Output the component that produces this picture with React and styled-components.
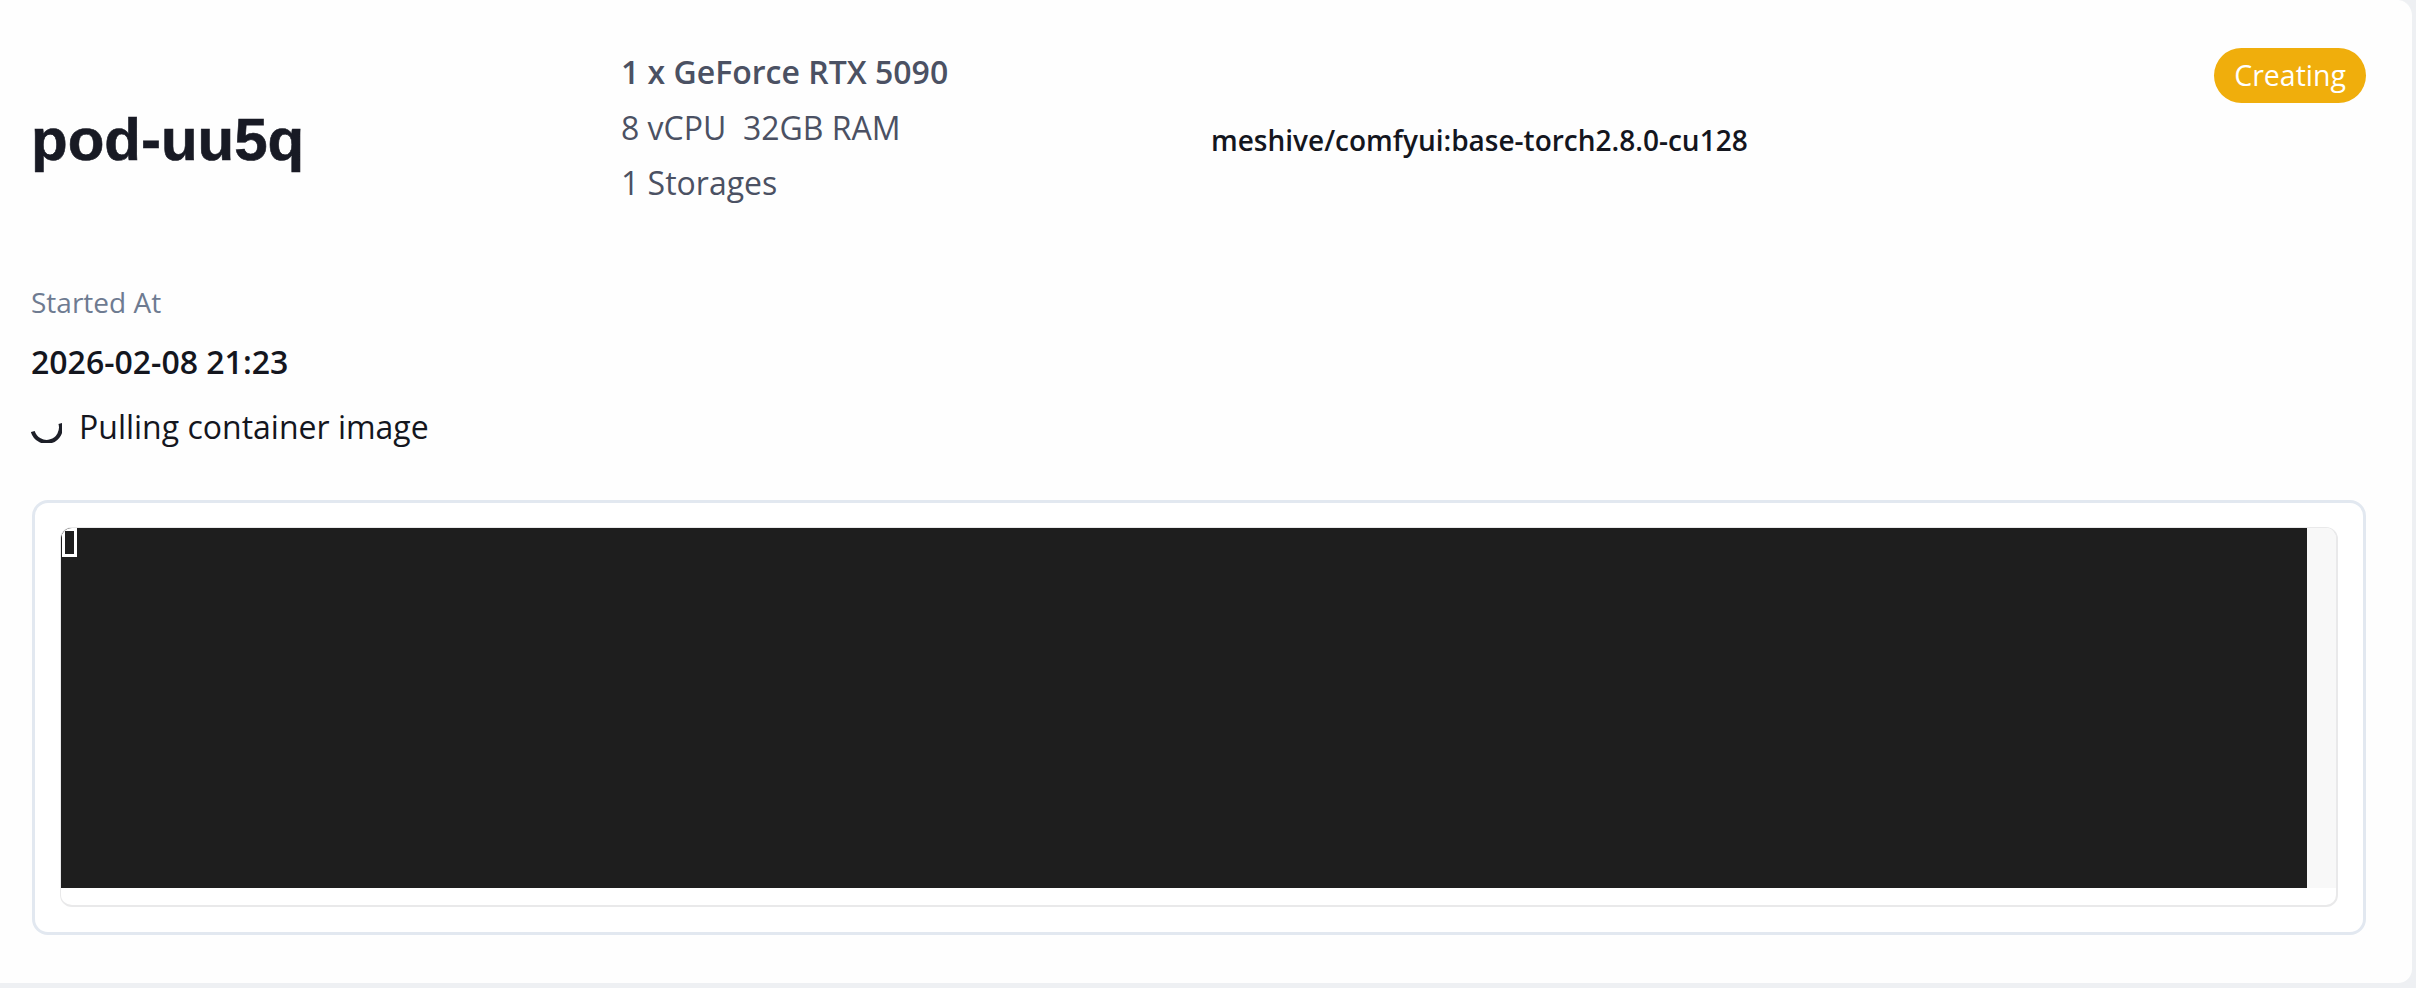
import styled, { createGlobalStyle } from 'styled-components';

const GlobalStyle = createGlobalStyle`
  html, body {
    margin: 0;
    padding: 0;
    background: #eef0f3;
  }
  * { box-sizing: border-box; }
`

const Card = styled.div`
  width: 2414px;
  height: 985px;
  padding: 44px 46px 0 31px;
  background: #fefefe;
  border-right: 2px solid #eef0f3;
  border-bottom: 2px solid #eef0f3;
  border-radius: 0 16px 16px 0;
  font-family: "Open Sans", sans-serif;
`

const Summary = styled.div`
  display: grid;
  grid-template-columns: 590px 590px 1fr auto;
  height: 192px;
  align-items: center;
`

const Title = styled.h1`
  margin: 0;
  font-family: "Liberation Sans", sans-serif;
  font-weight: 700;
  font-size: 60px;
  -webkit-text-stroke: 0.6px #181a24;
  line-height: 1;
  color: #181a24;
`

const Specs = styled.div`
  align-self: start;
  display: flex;
  flex-direction: column;
  color: #4b5163;
  font-size: 32px;
  line-height: 55.5px;
`

const SpecLine = styled.div`
  font-weight: ${p => (p.$strong ? 600 : 400)};
  white-space: pre;
`

const ImageName = styled.div`
  font-size: 28px;
  font-weight: 600;
  color: #14161e;
`

const Badge = styled.span`
  align-self: start;
  margin-top: 4px;
  padding: 0 20px;
  height: 55px;
  line-height: 55px;
  border-radius: 28px;
  background: #f0ae0c;
  color: #fff;
  font-size: 28.5px;
`

const Meta = styled.div`
  margin-top: 47px;
  display: flex;
  flex-direction: column;
`

const MetaLabel = styled.div`
  font-size: 28px;
  line-height: 38px;
  color: #6e7b91;
`

const MetaValue = styled.div`
  margin-top: 23px;
  font-size: 32px;
  font-weight: 600;
  line-height: 36px;
  color: #14161e;
`

const Status = styled.div`
  margin-top: 25px;
  display: flex;
  align-items: center;
  gap: 17px;
  font-size: 32px;
  line-height: 44px;
  color: #14161e;
`

const Frame = styled.div`
  margin: 51px 0 0 1px;
  height: 435px;
  padding: 24px 25px 25px;
  border: 3px solid #e2e8f0;
  border-radius: 16px;
  background: #fff;
`

const Terminal = styled.div`
  position: relative;
  height: 380px;
  border: solid #e9e9ea;
  border-width: 1px 2px 2px 1px;
  border-radius: 12px;
  overflow: hidden;
  background: #fff;
`

const Screen = styled.div`
  display: flex;
  height: 360px;
`

const Output = styled.div`
  flex: 1;
  background: #1e1e1e;
`

const Scrollbar = styled.div`
  width: 29px;
  background: #f8f8f8;
`

const Cursor = styled.div`
  position: absolute;
  top: 0;
  left: 1px;
  width: 15px;
  height: 29px;
  border: 3px solid #fff;
  background: #1e1e1e;
`

const Spinner = () => (
  <svg width="31" height="31" viewBox="0 0 31 31" fill="none">
    <path d="M1.8 19.5 A14 14 0 0 0 29.4 11.5" stroke="#1d1f28" strokeWidth="4" strokeLinecap="butt" />
  </svg>
)

const App = () => {
  return (
    <>
      <GlobalStyle />
      <Card>
        <Summary>
          <Title>pod-uu5q</Title>
          <Specs>
            <SpecLine $strong>1 x GeForce RTX 5090</SpecLine>
            <SpecLine>8 vCPU  32GB RAM</SpecLine>
            <SpecLine>1 Storages</SpecLine>
          </Specs>
          <ImageName>meshive/comfyui:base-torch2.8.0-cu128</ImageName>
          <Badge>Creating</Badge>
        </Summary>
        <Meta>
          <MetaLabel>Started At</MetaLabel>
          <MetaValue>2026-02-08 21:23</MetaValue>
          <Status>
            <Spinner />
            Pulling container image
          </Status>
        </Meta>
        <Frame>
          <Terminal>
            <Screen>
              <Output />
              <Scrollbar />
            </Screen>
            <Cursor />
          </Terminal>
        </Frame>
      </Card>
    </>
  )
}

export default App;
